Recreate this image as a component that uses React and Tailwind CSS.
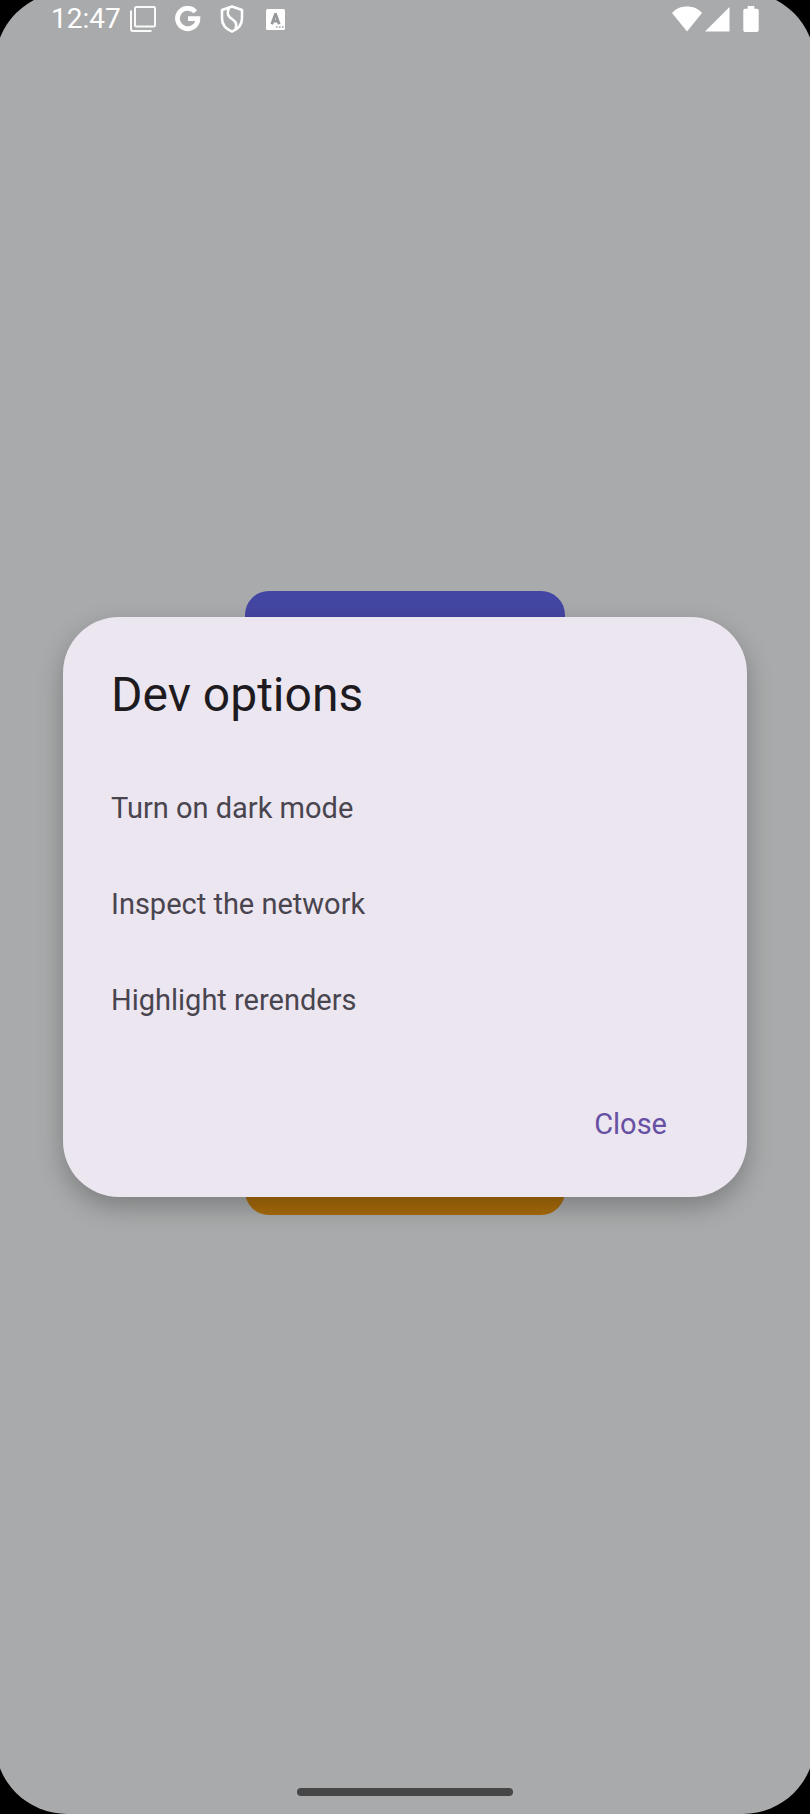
import React from "react";

const options = ["Turn on dark mode", "Inspect the network", "Highlight rerenders"];

function LayersIcon() {
  return (
    <svg width="26" height="26" viewBox="0 0 26 26" fill="none" stroke="#fafafa" strokeWidth="2" aria-hidden="true">
      <rect x="5" y="1" width="20" height="19.5" rx="1.2" />
      <path d="M1 4.500V23a2 2 0 0 0 2 2h18.500" />
    </svg>
  );
}

function GoogleIcon() {
  return (
    <svg width="26" height="26" viewBox="0 0 26 26" fill="none" stroke="#fff" strokeWidth="4.800" aria-hidden="true">
      <path d="M20.400 5.800A10.200 10.200 0 1 0 22.900 12.700H13" />
    </svg>
  );
}

function ShieldIcon() {
  return (
    <svg width="24" height="28" viewBox="0 0 24 28" fill="none" stroke="#fff" strokeWidth="2.600" strokeLinejoin="round" aria-hidden="true">
      <path d="M12 1.600 22 5v8.500c0 6-4 10.600-10 13.100C6 24.100 2 19.500 2 13.500V5Z" />
      <path d="M9 3C6.500 8 7.500 11 12 14c4.500 3 5 5.500 3.500 10.500" />
    </svg>
  );
}

function KeyboardIcon() {
  return (
    <svg width="19" height="21" viewBox="0 0 19 21" aria-hidden="true">
      <rect width="19" height="21" rx="1.500" fill="#fff" />
      <path d="M5.800 15.300 9.300 5.500h.4L13.200 15.300M7 12.200h5" fill="none" stroke="#98999a" strokeWidth="2.800" />
      <path d="M10 18h1.600M13 18h1.600M16 18h1.600" stroke="#a0a1a2" strokeWidth="1.500" />
    </svg>
  );
}

function WifiIcon() {
  return (
    <svg width="30" height="26" viewBox="0 0 30 26" fill="#fff" aria-hidden="true">
      <path d="M15 25.500 0 7C4 2.500 9 .500 15 .500S26 2.500 30 7Z" />
    </svg>
  );
}

function SignalIcon() {
  return (
    <svg width="25" height="26" viewBox="0 0 25 26" fill="#fff" aria-hidden="true">
      <path d="M24.500 1v24.500H0Z" />
    </svg>
  );
}

function BatteryIcon() {
  return (
    <svg width="16" height="26" viewBox="0 0 16 26" fill="#fff" aria-hidden="true">
      <path d="M4.700 0h6.600v2.700H14A1.700 1.700 0 0 1 15.700 4.400v19.900A1.700 1.700 0 0 1 14 26H2A1.700 1.700 0 0 1 .300 24.300V4.400A1.700 1.700 0 0 1 2 2.700h2.700Z" />
    </svg>
  );
}

function StatusBar() {
  return (
    <header className="flex h-12 items-center justify-between px-14 pt-1.5">
      <div className="flex h-7 items-center">
        <time className="text-[28px] leading-7 text-white">12:47</time>
        <div className="flex items-center gap-[19px] pl-[9px]">
          <LayersIcon />
          <GoogleIcon />
          <ShieldIcon />
          <span className="pl-[3px]">
            <KeyboardIcon />
          </span>
        </div>
      </div>
      <div className="flex items-center gap-[3px]">
        <WifiIcon />
        <SignalIcon />
        <span className="pl-[10px]">
          <BatteryIcon />
        </span>
      </div>
    </header>
  );
}

function Dialog() {
  return (
    <section
      role="dialog"
      aria-labelledby="dialog-title"
      className="flex w-full flex-col rounded-[56px] bg-[#ece6f0] px-12 pt-[46px] pb-8 shadow-[0_10px_26px_rgba(0,0,0,0.26)]"
    >
      <h1 id="dialog-title" className="text-[48px] leading-[64px] text-[#1d1b20]">
        Dev options
      </h1>
      <ul className="pt-[34px]">
        {options.map((label) => (
          <li key={label}>
            <button type="button" className="flex h-24 w-full items-center text-left text-[29px] text-[#49454f]">
              {label}
            </button>
          </li>
        ))}
      </ul>
      <div className="flex justify-end pt-9">
        <button type="button" className="h-20 px-8 text-[29px] text-[#6750a4]">
          Close
        </button>
      </div>
    </section>
  );
}

export default function App() {
  return (
    <div className="flex min-h-screen flex-col overflow-hidden bg-black font-['Roboto',sans-serif]">
      <div className="-mx-[5px] -mt-2 grid flex-1 grid-rows-[auto_1fr_auto] rounded-[72px] bg-[#a9aaab]">
        <StatusBar />
        <main className="grid items-center px-[68px]">
          <div className="col-start-1 row-start-1 mx-auto flex h-[624px] w-80 flex-col justify-between">
            <div className="h-36 rounded-3xl bg-[#4446a3]" />
            <div className="h-36 rounded-3xl bg-[#a86c0a]" />
          </div>
          <div className="col-start-1 row-start-1 pt-2">
            <Dialog />
          </div>
        </main>
        <footer className="flex h-12 justify-center pt-[22px]">
          <div className="h-2 w-[216px] rounded-full bg-[#464646]" />
        </footer>
      </div>
    </div>
  );
}
